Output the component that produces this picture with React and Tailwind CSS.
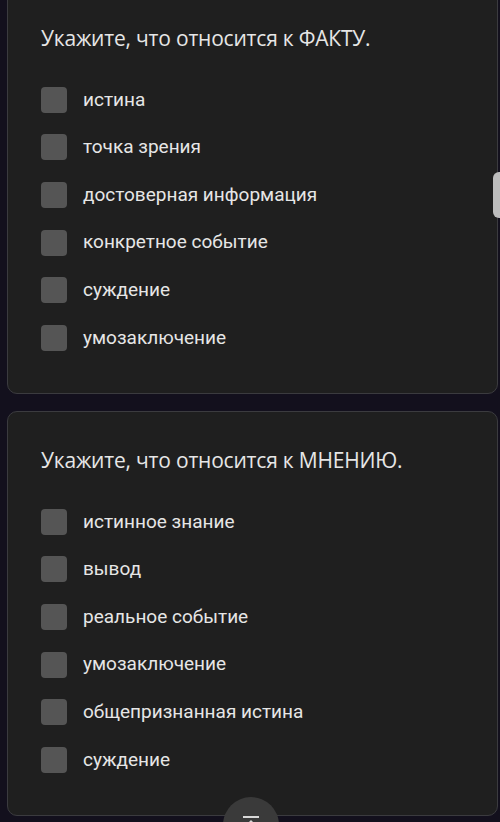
import React from "react";

const q1 = ["истина", "точка зрения", "достоверная информация", "конкретное событие", "суждение", "умозаключение"];
const q2 = ["истинное знание", "вывод", "реальное событие", "умозаключение", "общепризнанная истина", "суждение"];

function Card({ title, options, className }) {
  return (
    <div className={"ml-[7px] w-[491px] h-[405px] rounded-[10px] border border-[#3b3b3f] bg-[#1f1f1f] pt-[33px] pl-[33px] " + className}>
      <div className="text-[21px] leading-[30px] text-[#e6e6e6] font-['Open_Sans',sans-serif] tracking-[-0.2px]">{title}</div>
      <div className="mt-[23px] flex flex-col">
        {options.map((o) => (
          <div key={o} className="flex items-center h-[47.6px]">
            <div className="w-[26px] h-[26px] rounded-[4px] bg-[#555555]" />
            <div className="ml-[16px] text-[19px] text-[#e6e6e6] font-['Roboto',sans-serif]">{o}</div>
          </div>
        ))}
      </div>
    </div>
  );
}

export default function App() {
  return (
    <div className="relative h-[822px] w-[500px] overflow-hidden bg-[#13101d]">
      <div className="mt-[-11px]">
        <Card title="Укажите, что относится к ФАКТУ." options={q1} />
        <Card title="Укажите, что относится к МНЕНИЮ." options={q2} className="mt-[17px]" />
      </div>
      <div className="absolute left-[493px] top-[172px] w-[20px] h-[46px] rounded-[6px] bg-[#bdbdbd]" />
      <div className="absolute left-[223px] top-[797px] w-[56px] h-[56px] rounded-full bg-[#3a3a3a] flex justify-center">
        <svg width="24" height="24" viewBox="0 0 24 24" className="mt-[16px]">
          <path d="M8 11h3v10h2V11h3l-4-4-4 4zM4 3v2h16V3H4z" fill="#d8d8d8" />
        </svg>
      </div>
    </div>
  );
}
